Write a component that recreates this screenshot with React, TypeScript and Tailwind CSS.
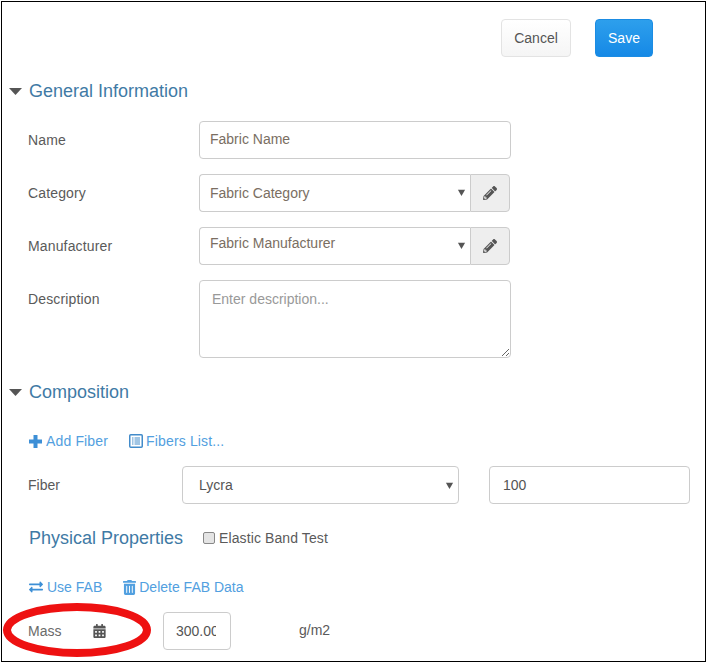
import { FaPencilAlt, FaExchangeAlt, FaTrashAlt, FaCalendarAlt } from "react-icons/fa";

function Caret({ className }: { className: string }) {
  return (
    <svg viewBox="0 0 10 10" className={className} aria-hidden="true">
      <path d="M1 2h8L5 9z" fill="#555" />
    </svg>
  );
}

function PlusIcon() {
  return (
    <svg width="13" height="13" viewBox="0 0 13 13" className="mr-[4px]" aria-hidden="true">
      <path d="M4.5 0h4v4.5H13v4H8.5V13h-4V8.5H0v-4h4.5z" fill="#3d8fd6" />
    </svg>
  );
}

function ListIcon() {
  return (
    <svg width="14" height="14" viewBox="0 0 14 14" aria-hidden="true">
      <rect x="0.75" y="0.75" width="12.5" height="12.5" rx="1" fill="none" stroke="#428bca" strokeWidth="1.5" />
      <path d="M3 4h1.5M5.5 4h5.5M3 6h1.5M5.5 6h5.5M3 8h1.5M5.5 8h5.5M3 10h1.5M5.5 10h5.5" stroke="#428bca" strokeWidth="1.1" />
    </svg>
  );
}

function Section({ title }: { title: string }) {
  return (
    <div className="flex h-[26px] items-center">
      <svg viewBox="0 0 13 7" className="ml-[7px] mr-[7px] h-[7px] w-[13px]" aria-hidden="true">
        <path d="M0 0h13L6.5 7z" fill="#555" />
      </svg>
      <h2 className="text-[18px] font-normal text-[#3f7aa5]">{title}</h2>
    </div>
  );
}

function Row({ label, children, className }: { label: string; children: React.ReactNode; className?: string }) {
  return (
    <div className={`flex items-start pl-[26px] ${className ?? ""}`}>
      <label className="w-[171px] pt-[9px] text-[14px] leading-[20px] tracking-[0.15px] text-[#5a5a5a]">{label}</label>
      {children}
    </div>
  );
}

function SelectGroup({ value, textClass }: { value: string; textClass?: string }) {
  return (
    <div className="flex h-[38px] w-[311px]">
      <div className="relative flex-1">
        <select
          defaultValue={value}
          className={`h-full w-full appearance-none rounded-l-[4px] border border-r-0 border-[#ccc] bg-white pl-[10px] text-[14px] text-[#7a6e62] ${textClass ?? ""}`}
        >
          <option>{value}</option>
        </select>
        <Caret className="pointer-events-none absolute right-[4px] top-[14px] h-[9px] w-[9px]" />
      </div>
      <div className="flex w-[40px] items-center justify-center rounded-r-[4px] border border-[#ccc] bg-[#eeeeee] text-[#555]">
        <FaPencilAlt className="h-[14px] w-[14px]" />
      </div>
    </div>
  );
}

export default function App() {
  return (
    <div className="relative h-[663px] w-[708px] overflow-hidden bg-white font-['Liberation_Sans',Arial,sans-serif]">
      <div className="mx-[1px] mt-[1px] h-[661px] w-[705px] border border-black">
        <div className="flex justify-end gap-[24px] pr-[52px] pt-[17px]">
          <button className="h-[38px] w-[70px] rounded-[4px] border border-[#e3e3e3] bg-gradient-to-b from-white to-[#f5f5f5] text-[14px] text-[#555]">
            Cancel
          </button>
          <button className="h-[38px] w-[58px] rounded-[4px] border border-[#1b8ce3] bg-gradient-to-b from-[#2d9fec] to-[#1589e6] text-[14px] text-white">
            Save
          </button>
        </div>

        <div className="mt-[21px]">
          <Section title="General Information" />
        </div>

        <Row label="Name" className="mt-[17px]">
          <input
            placeholder="Fabric Name"
            className="h-[38px] w-[312px] rounded-[4px] border border-[#ccc] px-[10px] pb-[2px] text-[14px] placeholder:text-[#7a6e62]"
          />
        </Row>
        <Row label="Category" className="mt-[15px]">
          <SelectGroup value="Fabric Category" />
        </Row>
        <Row label="Manufacturer" className="mt-[15px]">
          <SelectGroup value="Fabric Manufacturer" textClass="pb-[5px]" />
        </Row>
        <Row label="Description" className="mt-[15px]">
          <textarea
            placeholder="Enter description..."
            className="block h-[78px] w-[312px] rounded-[4px] border border-[#ccc] px-[12px] py-[8px] text-[14px] leading-[20px] placeholder:text-[#999]"
          />
        </Row>

        <div className="mt-[21px]">
          <Section title="Composition" />
        </div>

        <div className="mt-[26px] flex h-[20px] items-center pl-[27px] text-[14px] tracking-[0.15px] text-[#52a0e0]">
          <PlusIcon />
          <span>Add Fiber</span>
          <span className="ml-[21px] mr-[3px]">
            <ListIcon />
          </span>
          <span>Fibers List...</span>
        </div>

        <div className="mt-[15px] flex items-start pl-[26px]">
          <label className="w-[154px] pt-[9px] text-[14px] leading-[20px] text-[#5a5a5a]">Fiber</label>
          <div className="relative h-[38px] w-[277px]">
            <select
              defaultValue="Lycra"
              className="h-full w-full appearance-none rounded-[4px] border border-[#ccc] bg-white pl-[16px] text-[14px] text-[#555]"
            >
              <option>Lycra</option>
            </select>
            <Caret className="pointer-events-none absolute right-[5px] top-[15px] h-[9px] w-[9px]" />
          </div>
          <input
            defaultValue="100"
            className="ml-[30px] h-[38px] w-[201px] rounded-[4px] border border-[#ccc] px-[13px] text-[14px] text-[#555]"
          />
        </div>

        <div className="mt-[21px] flex h-[26px] items-center pl-[27px]">
          <h2 className="text-[18px] font-normal text-[#3f7aa5]">Physical Properties</h2>
          <input
            type="checkbox"
            className="ml-[20px] h-[12px] w-[12px] appearance-none rounded-[2px] border border-[#888] bg-[#e4e4e4]"
          />
          <span className="ml-[4px] text-[14px] tracking-[0.1px] text-[#5a5a5a]">Elastic Band Test</span>
        </div>

        <div className="mt-[26px] flex h-[20px] items-center pl-[27px] text-[14px] text-[#52a0e0]">
          <FaExchangeAlt className="mr-[4px] h-[14px] w-[14px] text-[#3d8fd6]" />
          <span>Use FAB</span>
          <FaTrashAlt className="ml-[21px] mr-[3px] h-[15px] w-[13px] text-[#52a0e0]" />
          <span>Delete FAB Data</span>
        </div>

        <div className="mt-[15px] flex items-center pl-[26px]">
          <span className="w-[65px] text-[14px] text-[#6a6a6a]">Mass</span>
          <FaCalendarAlt className="h-[14px] w-[13px] text-[#555]" />
          <input
            defaultValue="300.00"
            className="ml-[57px] h-[38px] w-[68px] rounded-[4px] border border-[#ccc] pl-[12px] pr-[14px] text-[14px] text-[#555]"
          />
          <span className="mb-[2px] ml-[68px] text-[14px] text-[#5a5a5a]">g/m2</span>
        </div>
      </div>

      <svg className="pointer-events-none absolute left-0 top-0" width="708" height="663" aria-hidden="true">
        <ellipse cx="77" cy="630" rx="70" ry="23" fill="none" stroke="#ee1111" strokeWidth="8" />
      </svg>
    </div>
  );
}
